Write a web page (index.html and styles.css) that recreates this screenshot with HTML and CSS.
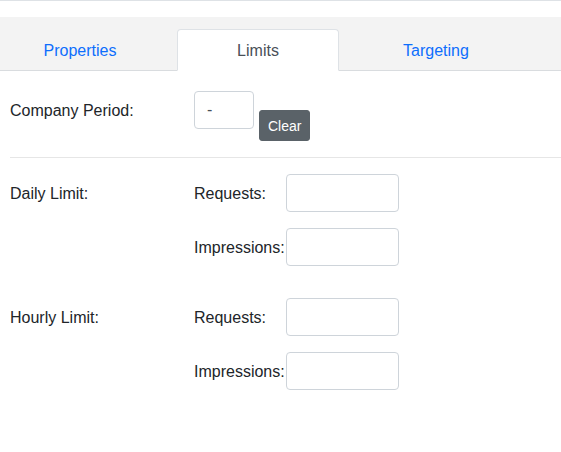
FILE: index.html
```html
<!DOCTYPE html>
<html>
<head>
<meta charset="utf-8">
<link rel="stylesheet" href="styles.css">
</head>
<body>
<div class="topbar"></div>
<div class="band">
  <ul class="nav">
    <li class="item"><a class="link">Properties</a></li>
    <li class="item"><a class="link active">Limits</a></li>
    <li class="item"><a class="link">Targeting</a></li>
  </ul>
</div>
<div class="content">
  <div class="period">
    <label class="lbl">Company Period:</label>
    <input class="box small" value="-">
    <button class="btn">Clear</button>
  </div>
  <hr class="sep">
  <div class="groups">
    <div class="group">
      <span class="glabel">Daily Limit:</span>
      <span class="flabel">Requests:</span>
      <input class="box wide">
      <span class="flabel r2">Impressions:</span>
      <input class="box wide r2">
    </div>
    <div class="group">
      <span class="glabel">Hourly Limit:</span>
      <span class="flabel">Requests:</span>
      <input class="box wide">
      <span class="flabel r2">Impressions:</span>
      <input class="box wide r2">
    </div>
  </div>
</div>
</body>
</html>
```
FILE: styles.css
```css
html, body {
  margin: 0;
  padding: 0;
  background: #fff;
  font-family: "Liberation Sans", Arial, sans-serif;
  font-size: 16px;
  color: #212529;
}
.topbar {
  border-top: 1px solid #dee2e6;
  height: 16px;
}
.band {
  background: #f3f3f3;
  padding-top: 12px;
  border-bottom: 1px solid #d9dcdf;
}
.nav {
  list-style: none;
  margin: 0 0 -1px -9px;
  padding: 0;
  display: flex;
}
.item {
  width: 178px;
  flex: none;
  display: flex;
}
.link {
  flex: 1;
  margin: 0 8px;
  padding: 9px 16px 7px;
  line-height: 24px;
  text-align: center;
  color: #0d6efd;
  border: 1px solid transparent;
  border-radius: 4px 4px 0 0;
}
.link.active {
  background: #fff;
  color: #495057;
  border-color: #dee2e6 #dee2e6 #fff;
}
.content {
  padding: 20px 0 0 10px;
}
.period {
  display: flex;
  align-items: flex-start;
}
.lbl {
  width: 184px;
  line-height: 36px;
  padding-top: 2px;
  flex: none;
}
.box {
  box-sizing: border-box;
  height: 38px;
  border: 1px solid #ced4da;
  border-radius: 4px;
  padding: 0 12px;
  font-family: inherit;
  font-size: 16px;
  color: #495057;
  background: #fff;
  margin: 0;
  outline: none;
}
.small {
  width: 60px;
}
.wide {
  width: 113px;
}
.btn {
  margin: 19px 0 0 5px;
  height: 31px;
  padding: 1px 8px 0;
  border: 1px solid #5a6268;
  border-radius: 3px;
  background: #5a6268;
  color: #fff;
  font-family: inherit;
  font-size: 14px;
  line-height: 28px;
}
.sep {
  border: 0;
  border-top: 1px solid #e6e6e6;
  margin: 16px 0;
}
.groups {
  display: flex;
  flex-direction: column;
  gap: 32px;
}
.group {
  display: grid;
  grid-template-columns: 184px 92px 113px;
  grid-template-rows: 38px 38px;
  row-gap: 16px;
  align-items: center;
}
.glabel {
  grid-column: 1;
  grid-row: 1;
  padding-top: 2px;
}
.flabel {
  grid-column: 2;
  grid-row: 1;
  padding-top: 2px;
}
.wide {
  grid-column: 3;
  grid-row: 1;
}
.r2 {
  grid-row: 2;
}
```
